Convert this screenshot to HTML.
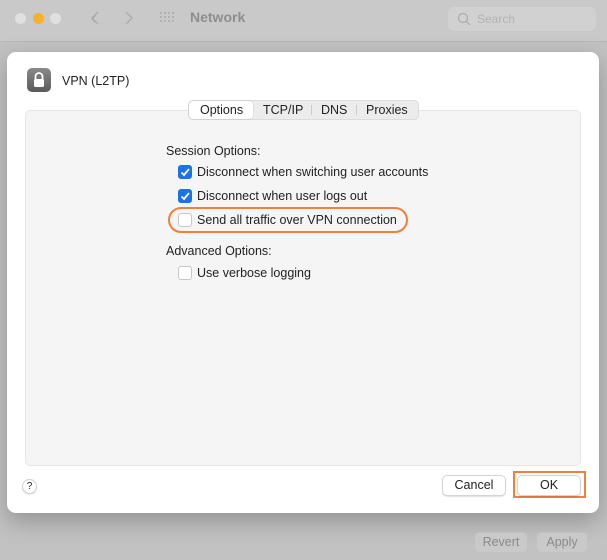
<!DOCTYPE html>
<html><head><style>
*{margin:0;padding:0;box-sizing:border-box}
body{width:607px;height:560px;overflow:hidden;background:#c2c2c2;font-family:"Liberation Sans",sans-serif;position:relative;color:#222}
.tb{position:absolute;left:0;top:0;width:607px;height:42px;background:#c9c9c9;border-bottom:1px solid #b8b8b8}
.dot{position:absolute;top:13px;width:11px;height:11px;border-radius:50%;background:#e0e0e0}
.abs{position:absolute}
.dlg{position:absolute;left:7px;top:52px;width:592px;height:461px;background:#fff;border-radius:9px;box-shadow:0 8px 24px rgba(0,0,0,.25)}
.panel{position:absolute;left:18px;top:58px;width:556px;height:356px;background:#f5f5f5;border:1px solid #e6e6e6;border-radius:5px}
.seg{position:absolute;left:181px;top:48px;width:231px;height:20px;background:#ececec;border:1px solid #dcdcdc;border-radius:5px;font-size:12.5px}
.seg span{position:absolute;top:2px}
.cb{position:absolute;width:14px;height:14px;border-radius:3px;border:1px solid #c8c8c8;background:#fff}
.cb.on{background:#1a73e8;border-color:#1a73e8}
.t{position:absolute;font-size:12.5px;color:#222}
.btn{position:absolute;height:21px;background:#fff;border:1px solid #d4d4d4;border-radius:5px;box-shadow:0 1px 1px rgba(0,0,0,.12);font-size:12.5px;text-align:center;line-height:19px}
</style></head><body>
<div class="tb">
<div class="dot" style="left:15px"></div>
<div class="dot" style="left:33px;background:#f5b227"></div>
<div class="dot" style="left:50px"></div>
<div class="abs" style="left:91px;top:8px;font-size:18px;color:#a8a8a8">&#x2039;</div>
<div class="abs" style="left:92px;top:9px;width:9px;height:9px;border-left:1.5px solid #aaa;border-bottom:1.5px solid #aaa;transform:rotate(45deg);display:none"></div>
<svg class="abs" style="left:90px;top:10px" width="50" height="16"><path d="M8 2 L2 8 L8 14" fill="none" stroke="#adadad" stroke-width="1.5"/><path d="M36 2 L42 8 L36 14" fill="none" stroke="#adadad" stroke-width="1.5"/></svg>
<svg class="abs" style="left:159px;top:11px" width="18" height="14" fill="#a9a9a9"><circle cx="2" cy="2" r="1"/><circle cx="6" cy="2" r="1"/><circle cx="10" cy="2" r="1"/><circle cx="14" cy="2" r="1"/><circle cx="2" cy="6" r="1"/><circle cx="6" cy="6" r="1"/><circle cx="10" cy="6" r="1"/><circle cx="14" cy="6" r="1"/><circle cx="2" cy="10" r="1"/><circle cx="6" cy="10" r="1"/><circle cx="10" cy="10" r="1"/><circle cx="14" cy="10" r="1"/></svg>
<div class="abs" style="left:190px;top:9px;font-size:14px;font-weight:bold;color:#8e8e8e">Network</div>
<div class="abs" style="left:448px;top:7px;width:148px;height:24px;background:#d1d1d1;border-radius:6px"></div>
<svg class="abs" style="left:457px;top:12px" width="14" height="14"><circle cx="6" cy="6" r="4.5" fill="none" stroke="#aaa" stroke-width="1.2"/><path d="M9.5 9.5 L13 13" stroke="#aaa" stroke-width="1.2"/></svg>
<div class="abs" style="left:477px;top:12px;font-size:12px;color:#b2b2b2">Search</div>
</div>
<div class="dlg">
<div class="abs" style="left:20px;top:16px;width:24px;height:24px;border-radius:5px;background:linear-gradient(#8a8a8a,#5a5a5a)"></div>
<svg class="abs" style="left:20px;top:16px" width="24" height="24"><path d="M8.5 11 V8.5 a3.5 3.5 0 0 1 7 0 V11" fill="none" stroke="#fff" stroke-width="1.8"/><rect x="7" y="11" width="10" height="8" rx="1.5" fill="#fff"/></svg>
<div class="t" style="left:55px;top:22px;font-size:12.5px">VPN (L2TP)</div>
<div class="panel"></div>
<div class="seg">
<div class="abs" style="left:0;top:0;width:64px;height:18px;background:#fff;border-radius:4px;box-shadow:0 0 1px rgba(0,0,0,.3)"></div>
<span style="left:11px">Options</span>
<span style="left:74px">TCP/IP</span>
<div class="abs" style="left:122px;top:4px;width:1px;height:10px;background:#ccc"></div>
<span style="left:132px">DNS</span>
<div class="abs" style="left:167px;top:4px;width:1px;height:10px;background:#ccc"></div>
<span style="left:177px">Proxies</span>
</div>
<div class="t" style="left:159px;top:92px">Session Options:</div>
<div class="cb on" style="left:171px;top:113px"><svg width="12" height="12" style="position:absolute;left:0;top:0"><path d="M2.5 6.5 L5 9 L10 3" fill="none" stroke="#fff" stroke-width="1.8"/></svg></div>
<div class="t" style="left:190px;top:113px">Disconnect when switching user accounts</div>
<div class="cb on" style="left:171px;top:137px"><svg width="12" height="12" style="position:absolute;left:0;top:0"><path d="M2.5 6.5 L5 9 L10 3" fill="none" stroke="#fff" stroke-width="1.8"/></svg></div>
<div class="t" style="left:190px;top:137px">Disconnect when user logs out</div>
<div class="abs" style="left:161px;top:155px;width:240px;height:26px;border:2px solid #f0803c;border-radius:13px"></div>
<div class="cb" style="left:171px;top:161px"></div>
<div class="t" style="left:190px;top:161px">Send all traffic over VPN connection</div>
<div class="t" style="left:159px;top:192px">Advanced Options:</div>
<div class="cb" style="left:171px;top:214px"></div>
<div class="t" style="left:190px;top:214px">Use verbose logging</div>
<div class="abs" style="left:15px;top:427px;width:15px;height:15px;border-radius:50%;border:1px solid #d0d0d0;background:#fff;box-shadow:0 1px 1px rgba(0,0,0,.1);font-size:10px;text-align:center;line-height:13px">?</div>
<div class="btn" style="left:435px;top:423px;width:64px">Cancel</div>
<div class="abs" style="left:506px;top:419px;width:73px;height:27px;border:2px solid #f0803c"></div>
<div class="btn" style="left:510px;top:423px;width:64px">OK</div>
</div>
<div class="btn" style="left:474px;top:532px;width:54px;background:#c9c9c9;border-color:#c0c0c0;color:#8a8a8a;box-shadow:none">Revert</div>
<div class="btn" style="left:536px;top:532px;width:52px;background:#c9c9c9;border-color:#c0c0c0;color:#8a8a8a;box-shadow:none">Apply</div>
</body></html>
